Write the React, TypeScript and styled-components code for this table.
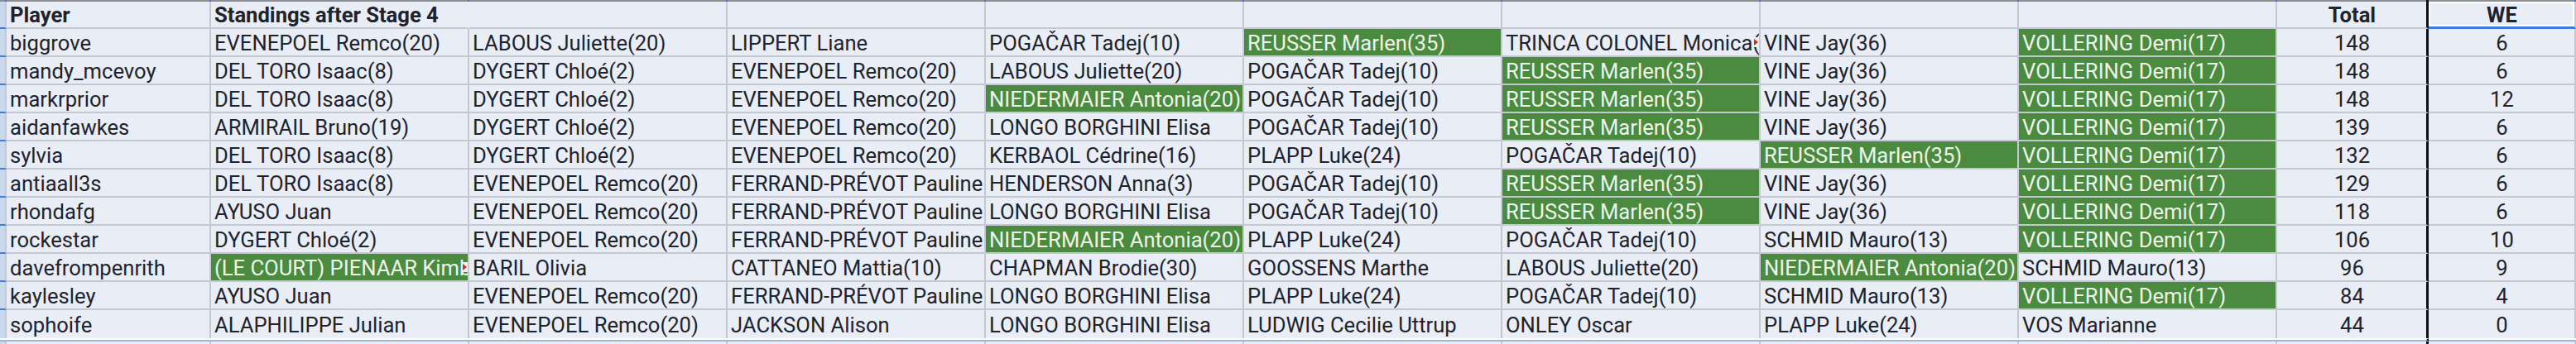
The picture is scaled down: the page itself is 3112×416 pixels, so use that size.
import React from "react";
import styled, { createGlobalStyle, css } from "styled-components";

const GlobalStyle = createGlobalStyle`
  html, body { margin: 0; padding: 0; background: #e8edf6; }
  body { width: 3112px; height: 416px; overflow: hidden; }
`;

const COLS = "8px 247px repeat(8, 312px) 183px 178px";
const GRID = "#c4c8d0";
const BG = "#e8edf6";
const GREEN = "#4b8b3f";

const Sheet = styled.div`
  display: grid;
  grid-template-columns: ${COLS};
  font-family: Roboto, "Open Sans", "Liberation Sans", sans-serif;
  font-size: 25.6px;
  color: #1f232b;
  background: ${BG};
`;

const TopBarCell = styled.div<{ $black?: boolean }>`
  height: 2px;
  background: #8d8e94;
  border-right: ${(p) => (p.$black ? "3px solid #111" : "2px solid #3f7bd9")};
  box-sizing: border-box;
`;

const RowHead = styled.div<{ $h: number; $tick?: boolean }>`
  height: ${(p) => p.$h}px;
  box-sizing: border-box;
  background: #c8d8ef;
  border-right: 2px solid ${GRID};
  border-bottom: ${(p) => (p.$tick ? "2px solid #3f7bd9" : "none")};
`;

const Cell = styled.div<{
  $h: number;
  $green?: boolean;
  $align?: "left" | "center";
  $bold?: boolean;
  $black?: boolean;
  $noRight?: boolean;
  $noBottom?: boolean;
}>`
  position: relative;
  height: ${(p) => p.$h}px;
  box-sizing: border-box;
  display: flex;
  align-items: center;
  justify-content: ${(p) => (p.$align === "center" ? "center" : "flex-start")};
  padding: 1px 3px 0 4px;
  white-space: nowrap;
  overflow: hidden;
  font-weight: ${(p) => (p.$bold ? 700 : 400)};
  background: ${(p) => (p.$green ? GREEN : BG)};
  color: ${(p) => (p.$green ? "#eef3ea" : "#1f232b")};
  border-right: ${(p) =>
    p.$black ? "3px solid #111" : p.$noRight ? `2px solid ${BG}` : `2px solid ${GRID}`};
  border-bottom: ${(p) => (p.$noBottom ? "none" : `2px solid ${GRID}`)};
`;

const WeHead = styled(Cell)`
  box-shadow: inset 0 0 0 2px #ffffff;
  border-bottom: 3px solid #3c7be0;
`;

const Overflow = styled.span`
  position: absolute;
  right: 0;
  top: 50%;
  transform: translateY(-50%);
  width: 8px;
  height: 12px;
  background: #eef0f3;
  &::after {
    content: "";
    position: absolute;
    left: 2px;
    top: 1.5px;
    border-top: 4.5px solid transparent;
    border-bottom: 4.5px solid transparent;
    border-left: 5px solid #d8262b;
  }
`;

const FreezeCell = styled.div<{ $black?: boolean; $head?: boolean }>`
  height: 4px;
  box-sizing: border-box;
  border-top: 2px solid #ffffff;
  border-bottom: 2px solid #9fb5d3;
  ${(p) =>
    p.$black &&
    css`
      border-right: 3px solid #111;
    `}
  background: ${(p) => (p.$head ? "#c8d8ef" : BG)};
`;

const TailCell = styled.div<{ $black?: boolean; $head?: boolean }>`
  height: 10px;
  box-sizing: border-box;
  background: ${(p) => (p.$head ? "#c8d8ef" : BG)};
  border-right: ${(p) => (p.$black ? "3px solid #111" : `2px solid ${GRID}`)};
`;

type C = { t: string; g?: boolean; cut?: boolean };
type Row = { player: string; picks: C[]; total: number; we: number };

const p = (s: string): C => {
  let g = false;
  let cut = false;
  let t = s;
  if (t.startsWith("*")) {
    g = true;
    t = t.slice(1);
  }
  if (t.endsWith("!")) {
    cut = true;
    t = t.slice(0, -1);
  }
  return { t, g, cut };
};

const raw: [string, string[], number, number][] = [
  ["biggrove", ["EVENEPOEL Remco(20)", "LABOUS Juliette(20)", "LIPPERT Liane", "POGAČAR Tadej(10)", "*REUSSER Marlen(35)", "TRINCA COLONEL Monica(20)!", "VINE Jay(36)", "*VOLLERING Demi(17)"], 148, 6],
  ["mandy_mcevoy", ["DEL TORO Isaac(8)", "DYGERT Chloé(2)", "EVENEPOEL Remco(20)", "LABOUS Juliette(20)", "POGAČAR Tadej(10)", "*REUSSER Marlen(35)", "VINE Jay(36)", "*VOLLERING Demi(17)"], 148, 6],
  ["markrprior", ["DEL TORO Isaac(8)", "DYGERT Chloé(2)", "EVENEPOEL Remco(20)", "*NIEDERMAIER Antonia(20)", "POGAČAR Tadej(10)", "*REUSSER Marlen(35)", "VINE Jay(36)", "*VOLLERING Demi(17)"], 148, 12],
  ["aidanfawkes", ["ARMIRAIL Bruno(19)", "DYGERT Chloé(2)", "EVENEPOEL Remco(20)", "LONGO BORGHINI Elisa", "POGAČAR Tadej(10)", "*REUSSER Marlen(35)", "VINE Jay(36)", "*VOLLERING Demi(17)"], 139, 6],
  ["sylvia", ["DEL TORO Isaac(8)", "DYGERT Chloé(2)", "EVENEPOEL Remco(20)", "KERBAOL Cédrine(16)", "PLAPP Luke(24)", "POGAČAR Tadej(10)", "*REUSSER Marlen(35)", "*VOLLERING Demi(17)"], 132, 6],
  ["antiaall3s", ["DEL TORO Isaac(8)", "EVENEPOEL Remco(20)", "FERRAND-PRÉVOT Pauline", "HENDERSON Anna(3)", "POGAČAR Tadej(10)", "*REUSSER Marlen(35)", "VINE Jay(36)", "*VOLLERING Demi(17)"], 129, 6],
  ["rhondafg", ["AYUSO Juan", "EVENEPOEL Remco(20)", "FERRAND-PRÉVOT Pauline", "LONGO BORGHINI Elisa", "POGAČAR Tadej(10)", "*REUSSER Marlen(35)", "VINE Jay(36)", "*VOLLERING Demi(17)"], 118, 6],
  ["rockestar", ["DYGERT Chloé(2)", "EVENEPOEL Remco(20)", "FERRAND-PRÉVOT Pauline", "*NIEDERMAIER Antonia(20)", "PLAPP Luke(24)", "POGAČAR Tadej(10)", "SCHMID Mauro(13)", "*VOLLERING Demi(17)"], 106, 10],
  ["davefrompenrith", ["*(LE COURT) PIENAAR Kimberley(5)!", "BARIL Olivia", "CATTANEO Mattia(10)", "CHAPMAN Brodie(30)", "GOOSSENS Marthe", "LABOUS Juliette(20)", "*NIEDERMAIER Antonia(20)", "SCHMID Mauro(13)"], 96, 9],
  ["kaylesley", ["AYUSO Juan", "EVENEPOEL Remco(20)", "FERRAND-PRÉVOT Pauline", "LONGO BORGHINI Elisa", "PLAPP Luke(24)", "POGAČAR Tadej(10)", "SCHMID Mauro(13)", "*VOLLERING Demi(17)"], 84, 4],
  ["sophoife", ["ALAPHILIPPE Julian", "EVENEPOEL Remco(20)", "JACKSON Alison", "LONGO BORGHINI Elisa", "LUDWIG Cecilie Uttrup", "ONLEY Oscar", "PLAPP Luke(24)", "VOS Marianne"], 44, 0],
];

const rows: Row[] = raw.map(([player, picks, total, we]) => ({
  player,
  picks: picks.map(p),
  total,
  we,
}));

const HEADER_H = 33;
const ROW_H = 34;
const cols = Array.from({ length: 12 });

export default function App() {
  return (
    <>
      <GlobalStyle />
      <Sheet>
        {cols.map((_, i) => (
          <TopBarCell key={`tb${i}`} $black={i === 10} />
        ))}

        <RowHead $h={HEADER_H} $tick />
        <Cell $h={HEADER_H} $bold>Player</Cell>
        <Cell $h={HEADER_H} $bold $noRight>Standings after Stage 4</Cell>
        {Array.from({ length: 7 }).map((_, i) => (
          <Cell key={`h${i}`} $h={HEADER_H} />
        ))}
        <Cell $h={HEADER_H} $bold $align="center" $black>Total</Cell>
        <WeHead $h={HEADER_H} $bold $align="center">WE</WeHead>

        {rows.map((r, ri) => (
          <React.Fragment key={r.player}>
            <RowHead $h={ROW_H} $tick={ri < rows.length - 1} />
            <Cell $h={ROW_H} $noBottom={ri === rows.length - 1}>{r.player}</Cell>
            {r.picks.map((c, ci) => (
              <Cell key={ci} $h={ROW_H} $green={c.g} $noBottom={ri === rows.length - 1}>
                {c.t}
                {c.cut && <Overflow />}
              </Cell>
            ))}
            <Cell $h={ROW_H} $align="center" $black $noBottom={ri === rows.length - 1}>
              {r.total}
            </Cell>
            <Cell $h={ROW_H} $align="center" $noBottom={ri === rows.length - 1}>
              {r.we}
            </Cell>
          </React.Fragment>
        ))}

        {cols.map((_, i) => (
          <FreezeCell key={`fz${i}`} $black={i === 10} $head={i === 0} />
        ))}
        {cols.map((_, i) => (
          <TailCell key={`tl${i}`} $black={i === 10} $head={i === 0} />
        ))}
      </Sheet>
    </>
  );
}
